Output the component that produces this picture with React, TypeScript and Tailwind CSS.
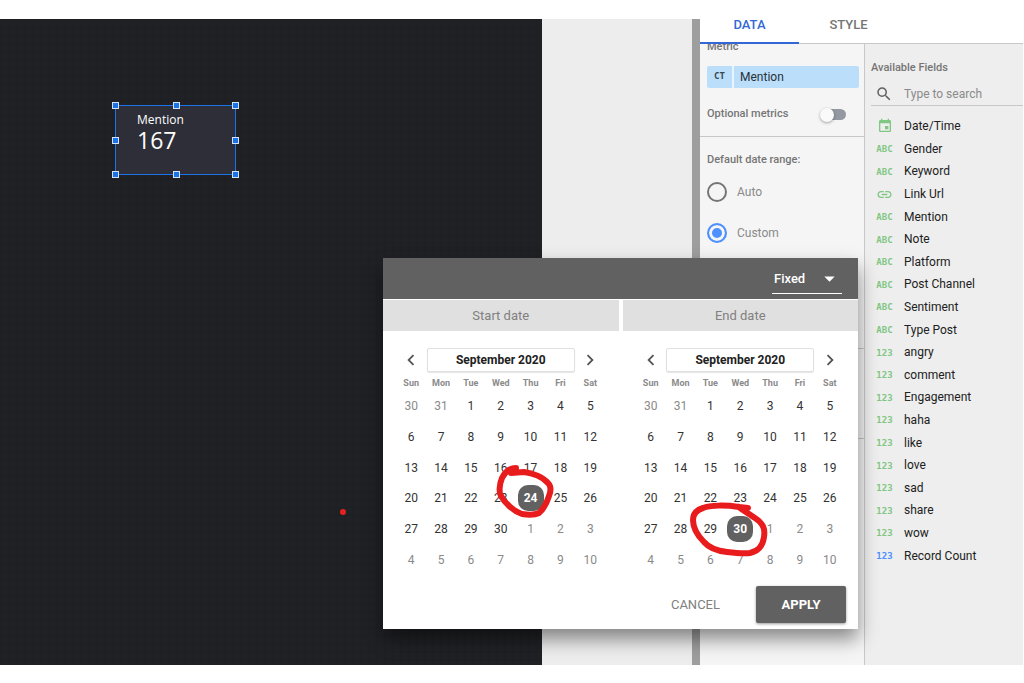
import { useState } from 'react';
import { MdArrowDropDown, MdChevronLeft, MdChevronRight, MdEvent, MdLink, MdSearch } from 'react-icons/md';

type FieldKind = 'date' | 'text' | 'link' | 'number' | 'count';

// ─── Data ─────────────────────────────────────────────────────────────────────
const FIELDS: { name: string; kind: FieldKind }[] = [
  { name: 'Date/Time', kind: 'date' },
  { name: 'Gender', kind: 'text' },
  { name: 'Keyword', kind: 'text' },
  { name: 'Link Url', kind: 'link' },
  { name: 'Mention', kind: 'text' },
  { name: 'Note', kind: 'text' },
  { name: 'Platform', kind: 'text' },
  { name: 'Post Channel', kind: 'text' },
  { name: 'Sentiment', kind: 'text' },
  { name: 'Type Post', kind: 'text' },
  { name: 'angry', kind: 'number' },
  { name: 'comment', kind: 'number' },
  { name: 'Engagement', kind: 'number' },
  { name: 'haha', kind: 'number' },
  { name: 'like', kind: 'number' },
  { name: 'love', kind: 'number' },
  { name: 'sad', kind: 'number' },
  { name: 'share', kind: 'number' },
  { name: 'wow', kind: 'number' },
  { name: 'Record Count', kind: 'count' },
];

const WEEKDAYS = ['Sun', 'Mon', 'Tue', 'Wed', 'Thu', 'Fri', 'Sat'];

// 30 Aug – 10 Oct 2020, six full weeks
const DAYS = Array.from({ length: 42 }, (_, i) => {
  const date = new Date(2020, 7, 30 + i);
  return { day: date.getDate(), current: date.getMonth() === 8 };
});

const HANDLES = [
  '-left-1 -top-1',
  'left-[57px] -top-1',
  '-right-1 -top-1',
  '-left-1 top-[31px]',
  '-right-1 top-[31px]',
  '-left-1 -bottom-1',
  'left-[57px] -bottom-1',
  '-right-1 -bottom-1',
];

// ─── Canvas ───────────────────────────────────────────────────────────────────
function Canvas() {
  return (
    <section className="relative min-w-0 flex-1 bg-[#202125] bg-[linear-gradient(#1e1f22_1px,transparent_1px),linear-gradient(90deg,#1e1f22_1px,transparent_1px)] bg-[size:8px_8px]">
      <div className="absolute left-[115px] top-[86px] h-[70px] w-[121px] border border-[#1a73e8] bg-[#2d2e38] pl-[21px] pt-[6px] font-['Open_Sans','Noto_Sans',sans-serif] text-white">
        <div className="text-[12px] leading-[16px]">Mention</div>
        <div className="text-[23px] leading-[24px]">167</div>
        {HANDLES.map((place) => (
          <span key={place} className={`absolute size-[7px] border border-[#d5e3f7] bg-[#1a73e8] ${place}`} />
        ))}
      </div>
      <span className="absolute left-[340px] top-[490px] size-[6px] rounded-full bg-[#e5201f]" />
    </section>
  );
}

// ─── Data panel ───────────────────────────────────────────────────────────────
function MetricSettings() {
  const [range, setRange] = useState('custom');

  return (
    <div className="w-[165px] shrink-0 overflow-hidden border-r border-[#c8c8c8] bg-[#f5f5f5] text-[11px] text-[#757575]">
      <div className="-mt-[5px] pl-[7px] font-medium leading-[16px]">Metric</div>
      <button className="ml-[7px] mt-[11px] flex h-[22px] w-[152px] items-center rounded-[2px] bg-[#bbdefb] text-left text-[#37474f]">
        <span className="flex h-full w-[27px] items-center justify-center border-r-2 border-[#e8f4fe] font-['DejaVu_Sans_Mono',monospace] text-[9px] font-bold">
          CT
        </span>
        <span className="pl-[6px] text-[12px] text-[#263238]">Mention</span>
      </button>
      <label className="mt-[16px] flex h-[20px] items-center justify-between pl-[7px] pr-[18px] font-medium">
        Optional metrics
        <input type="checkbox" className="peer sr-only" />
        <span className="relative h-[11px] w-[21px] rounded-full bg-[#9499a1]">
          <span className="absolute -left-[5px] -top-[1px] size-[14px] rounded-full bg-[#fafafa] shadow-[0_1px_3px_rgba(0,0,0,0.35)]" />
        </span>
      </label>
      <div className="mt-[12px] h-[212px] border-t border-[#c8c8c8] pl-[7px] pt-[15px]">
        <fieldset>
          <legend className="font-medium leading-[16px]">Default date range:</legend>
          <label className="mt-[14px] flex h-[20px] items-center gap-[10px] text-[12px] text-[#8a8a8a]">
            <input
              type="radio"
              name="range"
              checked={range === 'auto'}
              onChange={() => setRange('auto')}
              className="size-[20px] appearance-none rounded-full border-2 border-[#757575] checked:border-[#4d90fe] checked:bg-[#4d90fe] checked:shadow-[inset_0_0_0_3px_#f5f5f5]"
            />
            Auto
          </label>
          <label className="mt-[21px] flex h-[20px] items-center gap-[10px] text-[12px] text-[#8a8a8a]">
            <input
              type="radio"
              name="range"
              checked={range === 'custom'}
              onChange={() => setRange('custom')}
              className="size-[20px] appearance-none rounded-full border-2 border-[#757575] checked:border-[#4d90fe] checked:bg-[#4d90fe] checked:shadow-[inset_0_0_0_3px_#f5f5f5]"
            />
            Custom
          </label>
        </fieldset>
      </div>
      <div className="h-[91px] border-y border-[#c8c8c8]" />
    </div>
  );
}

function FieldIcon({ kind }: { kind: FieldKind }) {
  if (kind === 'date') return <MdEvent className="size-[16px] text-[#81c784]" />;
  if (kind === 'link') return <MdLink className="size-[17px] text-[#81c784]" />;
  return (
    <span
      className={`pt-[2px] font-['DejaVu_Sans_Mono',monospace] text-[9px] font-bold ${kind === 'count' ? 'text-[#4d90fe]' : 'text-[#81c784]'}`}
    >
      {kind === 'text' ? 'ABC' : '123'}
    </span>
  );
}

function AvailableFields() {
  return (
    <div className="min-w-0 flex-1 bg-[#eeeeee] pl-[6px] pt-[16px]">
      <h2 className="text-[11px] font-medium leading-[16px] text-[#757575]">Available Fields</h2>
      <label className="mt-[6px] flex h-[24px] items-center border-b border-[#c8c8c8] pl-[4px]">
        <MdSearch className="size-[18px] shrink-0 text-[#616161]" />
        <input
          aria-label="Search fields"
          placeholder="Type to search"
          className="ml-[11px] w-full min-w-0 bg-transparent text-[12px] outline-none placeholder:text-[#8a8a8a]"
        />
      </label>
      <ul className="mt-[9px] grid h-[452px] auto-rows-fr">
        {FIELDS.map((field) => (
          <li key={field.name} className="flex items-center text-[12px] text-[#212121]">
            <span className="flex w-[27px] justify-center">
              <FieldIcon kind={field.kind} />
            </span>
            <span className="pl-[6px]">{field.name}</span>
          </li>
        ))}
      </ul>
    </div>
  );
}

function PropertyPanel() {
  return (
    <aside className="flex w-[323px] shrink-0 flex-col">
      <nav className="flex h-[25px] border-b border-[#c8c8c8] bg-white text-[13px] font-medium">
        <button className="-mb-px w-[99px] border-b-2 border-[#3367d6] pb-[12px] leading-[12px] text-[#3367d6]">DATA</button>
        <button className="w-[99px] pb-[12px] leading-[12px] text-[#757575]">STYLE</button>
      </nav>
      <div className="flex flex-1">
        <MetricSettings />
        <AvailableFields />
      </div>
    </aside>
  );
}

// ─── Date picker ──────────────────────────────────────────────────────────────
function Calendar({ label, initial }: { label: string; initial: number }) {
  const [selected, setSelected] = useState(initial);

  return (
    <section aria-label={label} className="flex-1">
      <h3 className="h-[31px] bg-[#e0e0e0] text-center text-[13px] leading-[31px] text-[#808080]">{label}</h3>
      <div className="mx-auto w-[209px] pt-[17px]">
        <div className="flex h-[24px] items-center justify-between px-[4px]">
          <button aria-label="Previous month" className="text-[#555555]">
            <MdChevronLeft className="size-[22px]" />
          </button>
          <button className="h-full w-[148px] rounded-[2px] border border-[#e0e0e0] text-[12px] font-bold text-[#212121] shadow-[0_1px_1px_rgba(0,0,0,0.1)]">
            September 2020
          </button>
          <button aria-label="Next month" className="text-[#555555]">
            <MdChevronRight className="size-[22px]" />
          </button>
        </div>
        <div className="mt-[3px] grid h-[16px] grid-cols-7 text-center text-[9px] font-bold leading-[16px] text-[#8a8a8a]">
          {WEEKDAYS.map((day) => (
            <span key={day}>{day}</span>
          ))}
        </div>
        <div className="grid h-[184px] auto-rows-fr grid-cols-7">
          {DAYS.map(({ day, current }, i) => (
            <button key={i} onClick={() => setSelected(i)} className="flex items-center justify-center text-[12px]">
              {i === selected ? (
                <span className="flex size-[26px] items-center justify-center rounded-[10px] bg-[#616161] font-bold text-white">
                  {day}
                </span>
              ) : (
                <span className={current ? 'text-[#333333]' : 'text-[#8a8a8a]'}>{day}</span>
              )}
            </button>
          ))}
        </div>
      </div>
    </section>
  );
}

// Freehand red marks around the chosen days
function Marks() {
  return (
    <svg
      className="pointer-events-none absolute left-0 top-0"
      width="475"
      height="371"
      viewBox="383 258 475 371"
      fill="none"
      stroke="#e81c1c"
      strokeWidth="6"
      strokeLinecap="round"
      strokeLinejoin="round"
    >
      <path d="M516 468C510 468 505 472 502 478C499 485 499 493 501 496C505 503 513 511 522 514C529 515 535 515 539 513C544 509 547 502 549 496C551 491 551 486 548 483C543 477 533 473 524 472L511 473" />
      <path d="M748 508L739 507C726 505 710 505 703 508C696 510 693 514 693 520C693 528 698 536 704 542C710 549 718 551 727 552C735 553 743 554 750 553C759 551 763 545 764 537C765 530 764 526 759 521C754 517 747 513 739 507" />
    </svg>
  );
}

function DateRangeDialog() {
  return (
    <div
      role="dialog"
      aria-label="Date range"
      className="absolute right-[165px] top-[239px] w-[475px] bg-white shadow-[0_10px_18px_rgba(0,0,0,0.45)]"
    >
      <div className="flex h-[41px] items-end justify-end bg-[#616161] pb-[5px] pr-[16px]">
        <div className="relative w-[70px] border-b border-white">
          <select aria-label="Range type" className="h-[28px] w-full appearance-none bg-transparent pl-[2px] text-[13px] font-medium text-white">
            <option>Fixed</option>
          </select>
          <MdArrowDropDown className="pointer-events-none absolute right-0 top-[1px] size-[25px] text-white" />
        </div>
      </div>
      <div className="flex gap-[4px] pt-px">
        <Calendar label="Start date" initial={25} />
        <Calendar label="End date" initial={31} />
      </div>
      <div className="flex items-center justify-end gap-[36px] pb-[6px] pr-[12px] pt-[11px] text-[13px]">
        <button className="text-[#808080]">CANCEL</button>
        <button className="h-[37px] w-[90px] rounded-[2px] bg-[#616161] font-bold text-white shadow-[0_1px_3px_rgba(0,0,0,0.4)]">
          APPLY
        </button>
      </div>
      <Marks />
    </div>
  );
}

export default function App() {
  return (
    <div className="flex min-h-screen flex-col bg-white pb-[18px] pr-px pt-[19px] font-['Roboto','Liberation_Sans',sans-serif]">
      <main className="relative flex flex-1">
        <Canvas />
        <div className="w-[150px] shrink-0 bg-[#ededed]" />
        <div className="w-[8px] shrink-0 bg-[#9e9e9e]" />
        <PropertyPanel />
        <DateRangeDialog />
      </main>
    </div>
  );
}
